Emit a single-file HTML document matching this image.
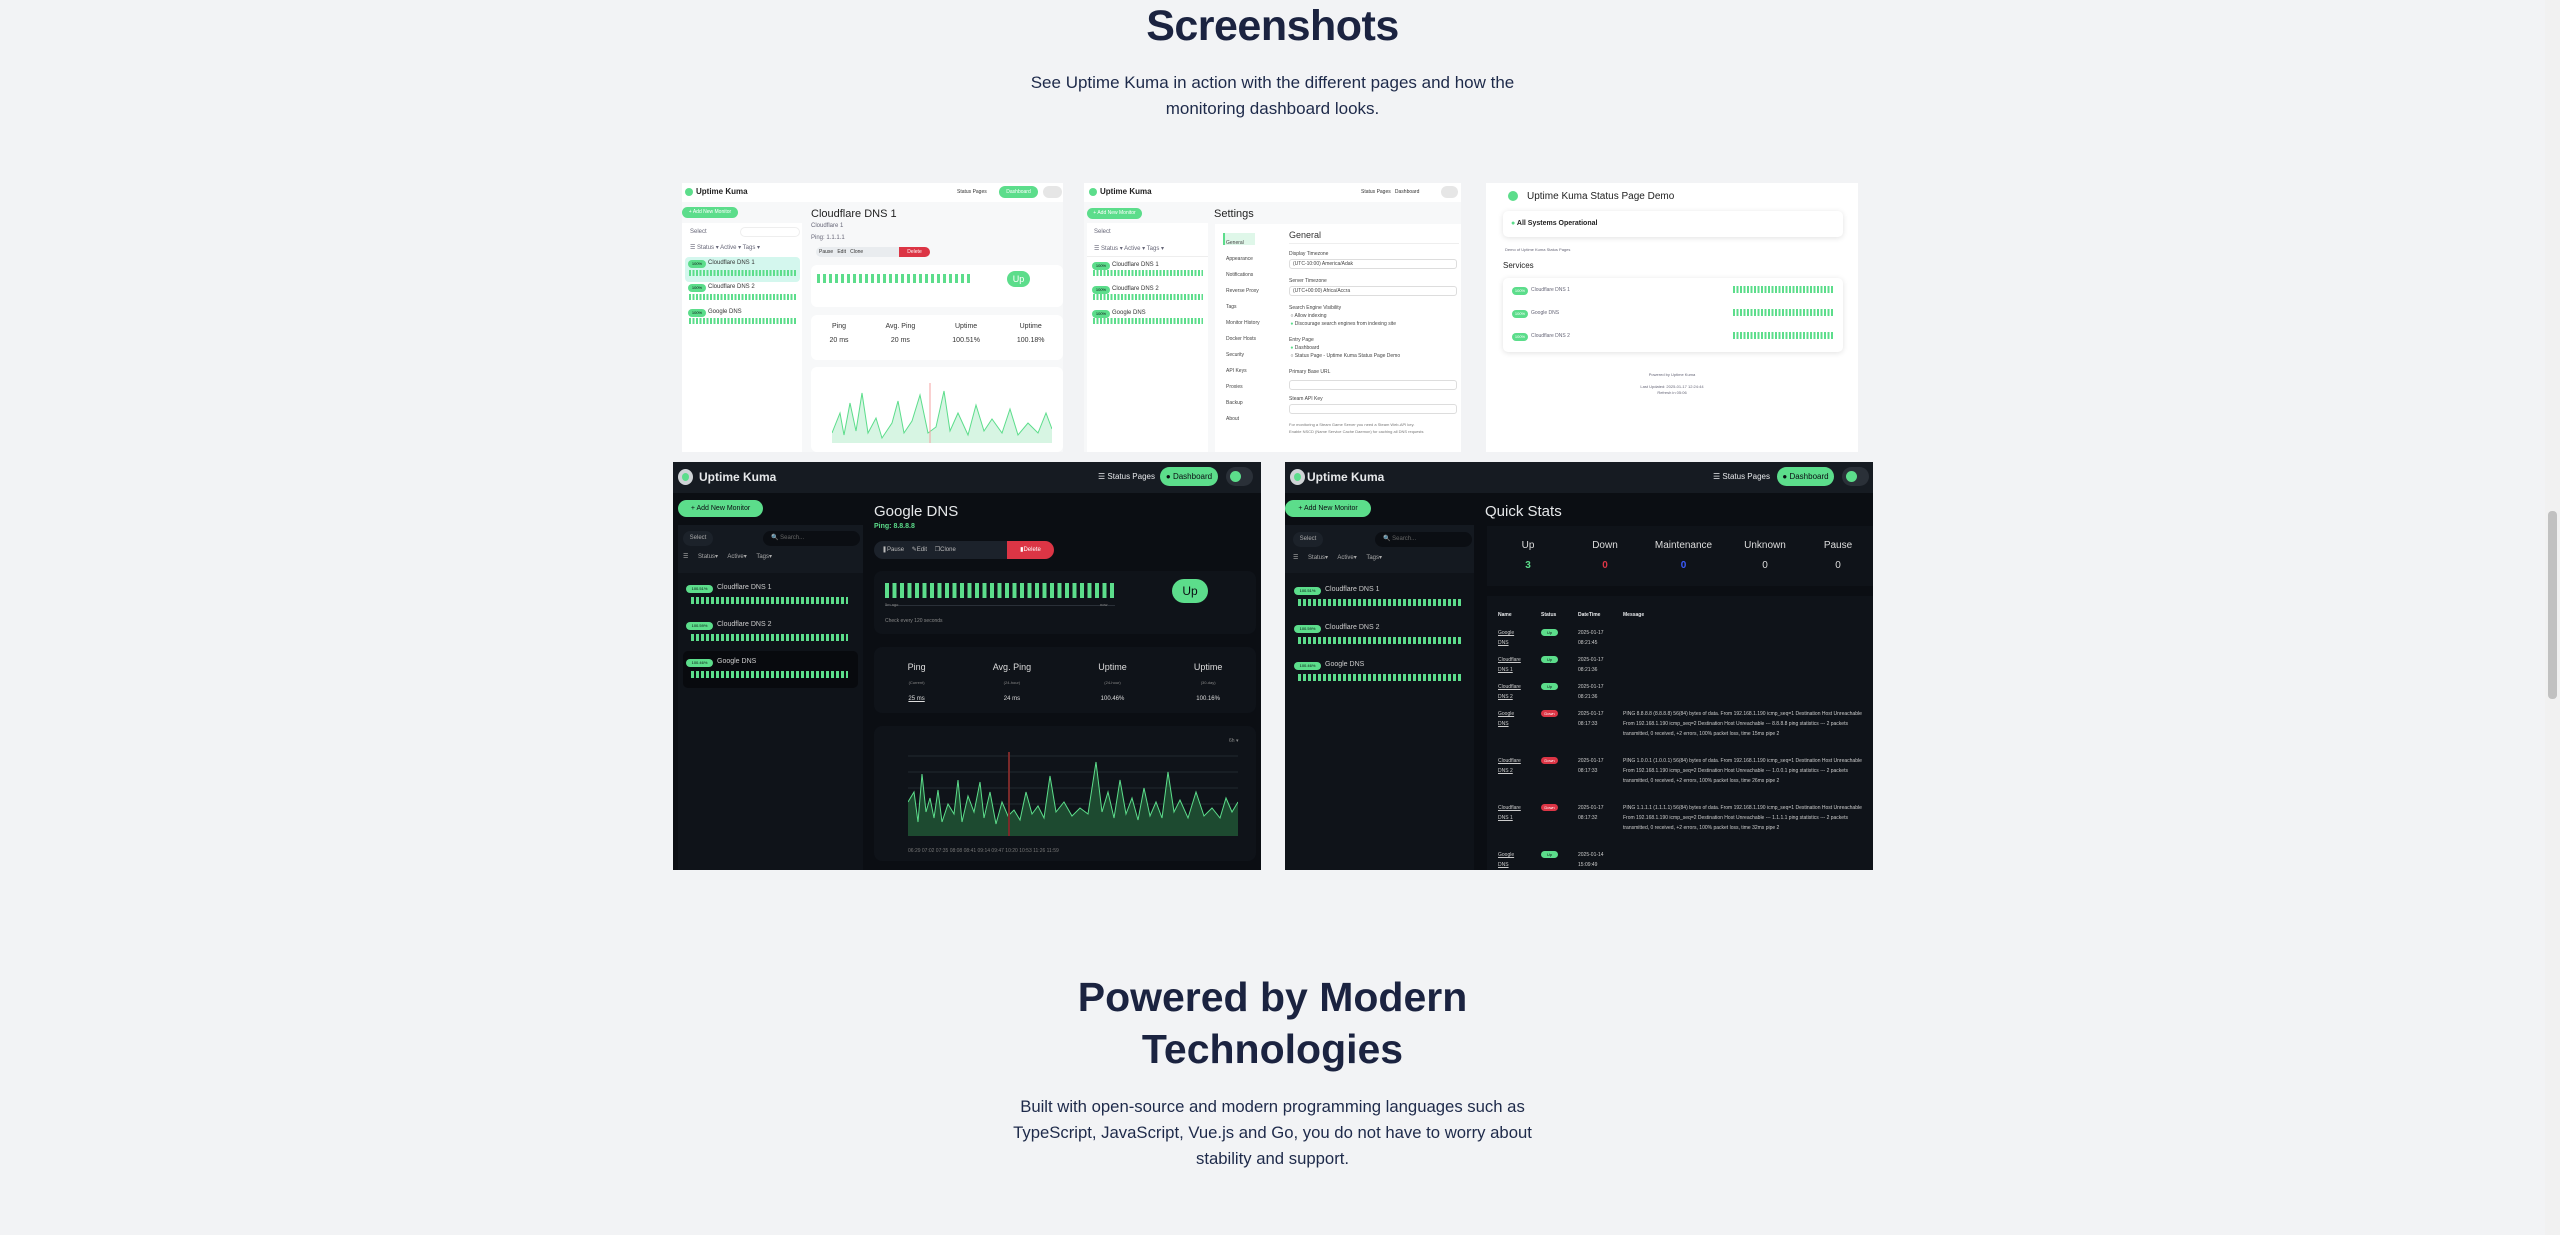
<!DOCTYPE html>
<html><head><meta charset="utf-8"><style>
*{margin:0;padding:0;box-sizing:border-box}
html,body{width:2560px;height:1235px;overflow:hidden;background:#f2f3f5;font-family:"Liberation Sans",sans-serif}
.a{position:absolute}
.t{color:#1b2340;text-align:center;white-space:nowrap}
.shot{position:absolute;overflow:hidden}
.lt{background:#f6f7f8}
.dk{background:#0b0e13}
.hb{background:repeating-linear-gradient(90deg,#5cdd8b 0 2px,transparent 2px 3.5px)}
.hbd{background:repeating-linear-gradient(90deg,#5cdd8b 0 4px,transparent 4px 7px)}
.w{color:#e6e8ea}
.g{color:#5cdd8b}
.s{font-size:6px;color:#667}
.pill{border-radius:20px;background:#5cdd8b;color:#fff;text-align:center}
.bd{border-radius:4px;background:#5cdd8b;color:#0b0e13;font-size:4px;text-align:center;line-height:8px}
</style></head><body>

<div class="a t" style="left:0;width:2545px;top:2px;font-size:43px;font-weight:bold;letter-spacing:-0.5px;line-height:48px">Screenshots</div>
<div class="a t" style="left:0;width:2545px;top:70px;font-size:17px;line-height:26px;color:#1e2a4a">See Uptime Kuma in action with the different pages and how the<br>monitoring dashboard looks.</div>

<!-- IMG1 light dashboard -->
<div class="shot lt" style="left:682px;top:183px;width:381px;height:269px;background:#f7f8f9">
  <div class="a" style="left:0;top:0;width:381px;height:19px;background:#fff"></div>
  <div class="a" style="left:3px;top:5px;width:8px;height:8px;border-radius:50%;background:#5cdd8b"></div>
  <div class="a" style="left:14px;top:4px;font-size:8px;font-weight:bold;color:#222">Uptime Kuma</div>
  <div class="a" style="left:275px;top:6px;font-size:5px;color:#333">Status Pages</div>
  <div class="a pill" style="left:317px;top:3px;width:39px;height:12px;font-size:5px;line-height:12px">Dashboard</div>
  <div class="a" style="left:361px;top:3px;width:19px;height:12px;border-radius:8px;background:#e6e6e6"></div>
  <div class="a pill" style="left:0;top:24px;width:56px;height:11px;font-size:5px;line-height:11px">+ Add New Monitor</div>
  <div class="a" style="left:0;top:40px;width:120px;height:229px;background:#fff"></div>
  <div class="a s" style="left:8px;top:46px">Select</div>
  <div class="a" style="left:58px;top:44px;width:60px;height:10px;border-radius:6px;border:1px solid #eee"></div>
  <div class="a s" style="left:8px;top:61px">☰ Status ▾ Active ▾ Tags ▾</div>
  <div class="a" style="left:3px;top:74px;width:115px;height:25px;background:#d4f7ee;border-radius:4px"></div>
  <div class="a bd" style="left:6px;top:77px;width:18px">100%</div><div class="a s" style="left:26px;top:77px;color:#333">Cloudflare DNS 1</div>
  <div class="a hb" style="left:7px;top:87px;width:108px;height:6px"></div>
  <div class="a bd" style="left:6px;top:101px;width:18px">100%</div><div class="a s" style="left:26px;top:101px;color:#333">Cloudflare DNS 2</div>
  <div class="a hb" style="left:7px;top:111px;width:108px;height:6px"></div>
  <div class="a bd" style="left:6px;top:126px;width:18px">100%</div><div class="a s" style="left:26px;top:126px;color:#333">Google DNS</div>
  <div class="a hb" style="left:7px;top:135px;width:108px;height:6px"></div>
  <div class="a" style="left:129px;top:25px;font-size:11px;color:#222">Cloudflare DNS 1</div>
  <div class="a s" style="left:129px;top:40px">Cloudflare 1</div>
  <div class="a s g" style="left:129px;top:52px">Ping: 1.1.1.1</div>
  <div class="a" style="left:134px;top:64px;width:84px;height:10px;background:#e9ecef;border-radius:5px 0 0 5px"></div>
  <div class="a s" style="left:137px;top:66px;color:#333;font-size:5px">Pause &nbsp; Edit &nbsp; Clone</div>
  <div class="a" style="left:217px;top:64px;width:31px;height:10px;background:#dc3545;border-radius:0 5px 5px 0;color:#fff;font-size:5px;line-height:10px;text-align:center">Delete</div>
  <div class="a" style="left:129px;top:82px;width:252px;height:42px;background:#fff;border-radius:6px"></div>
  <div class="a hb" style="left:135px;top:91px;width:155px;height:9px;background:repeating-linear-gradient(90deg,#5cdd8b 0 3px,transparent 3px 6px)"></div>
  <div class="a pill" style="left:325px;top:88px;width:23px;height:16px;font-size:9px;line-height:16px">Up</div>
  <div class="a" style="left:129px;top:132px;width:252px;height:45px;background:#fff;border-radius:6px"></div>
  <div class="a" style="left:129px;top:140px;width:252px;font-size:7px;color:#333;display:flex;justify-content:space-around;text-align:center"><span>Ping<br><br>20 ms</span><span>Avg. Ping<br><br>20 ms</span><span>Uptime<br><br>100.51%</span><span>Uptime<br><br>100.18%</span></div>
  <div class="a" style="left:129px;top:184px;width:252px;height:85px;background:#fff;border-radius:6px"></div>
  <svg class="a" style="left:150px;top:200px" width="220" height="68" viewBox="0 0 220 68"><polygon fill="#d7f5e3" points="0,60 0,50 8,30 12,52 18,20 24,48 30,10 36,50 44,35 50,55 60,40 66,18 72,50 80,38 88,12 96,50 104,44 112,8 118,48 126,30 136,52 144,22 152,48 160,36 170,50 178,26 186,52 196,40 206,50 214,30 220,46 220,60"/><polyline fill="none" stroke="#5cdd8b" stroke-width="1" points="0,50 8,30 12,52 18,20 24,48 30,10 36,50 44,35 50,55 60,40 66,18 72,50 80,38 88,12 96,50 104,44 112,8 118,48 126,30 136,52 144,22 152,48 160,36 170,50 178,26 186,52 196,40 206,50 214,30 220,46"/><line x1="98" y1="0" x2="98" y2="60" stroke="#f4a0a0"/></svg>
</div>

<!-- IMG2 settings -->
<div class="shot" style="left:1084px;top:183px;width:377px;height:269px;background:#f7f8f9">
  <div class="a" style="left:0;top:0;width:377px;height:19px;background:#fff"></div>
  <div class="a" style="left:5px;top:5px;width:8px;height:8px;border-radius:50%;background:#5cdd8b"></div>
  <div class="a" style="left:16px;top:4px;font-size:8px;font-weight:bold;color:#222">Uptime Kuma</div>
  <div class="a" style="left:277px;top:6px;font-size:5px;color:#333">Status Pages &nbsp; Dashboard</div>
  <div class="a" style="left:357px;top:3px;width:17px;height:12px;border-radius:8px;background:#e6e6e6"></div>
  <div class="a pill" style="left:3px;top:25px;width:55px;height:11px;font-size:5px;line-height:11px">+ Add New Monitor</div>
  <div class="a" style="left:3px;top:40px;width:121px;height:229px;background:#fff"></div>
  <div class="a s" style="left:10px;top:46px">Select</div>
  <div class="a s" style="left:10px;top:62px">☰ Status ▾ Active ▾ Tags ▾</div>
  <div class="a" style="left:3px;top:73px;width:121px;height:1px;background:#eee"></div>
  <div class="a bd" style="left:8px;top:79px;width:18px">100%</div><div class="a s" style="left:28px;top:79px;color:#333">Cloudflare DNS 1</div>
  <div class="a hb" style="left:9px;top:87px;width:110px;height:6px"></div>
  <div class="a bd" style="left:8px;top:103px;width:18px">100%</div><div class="a s" style="left:28px;top:103px;color:#333">Cloudflare DNS 2</div>
  <div class="a hb" style="left:9px;top:111px;width:110px;height:6px"></div>
  <div class="a bd" style="left:8px;top:127px;width:18px">100%</div><div class="a s" style="left:28px;top:127px;color:#333">Google DNS</div>
  <div class="a hb" style="left:9px;top:135px;width:110px;height:6px"></div>
  <div class="a" style="left:130px;top:25px;font-size:11px;color:#222">Settings</div>
  <div class="a" style="left:131px;top:41px;width:248px;height:228px;background:#fff"></div>
  <div class="a" style="left:139px;top:50px;width:32px;height:12px;background:#dff7e9;border-left:2px solid #5cdd8b"></div>
  <div class="a s" style="left:142px;top:52px;line-height:16px;font-size:5px;color:#444">General<br>Appearance<br>Notifications<br>Reverse Proxy<br>Tags<br>Monitor History<br>Docker Hosts<br>Security<br>API Keys<br>Proxies<br>Backup<br>About</div>
  <div class="a" style="left:205px;top:47px;font-size:9px;color:#333">General</div>
  <div class="a" style="left:205px;top:60px;width:170px;height:1px;background:#eee"></div>
  <div class="a s" style="left:205px;top:68px;font-size:5px;color:#444">Display Timezone</div>
  <div class="a" style="left:205px;top:76px;width:168px;height:10px;border:1px solid #ddd;border-radius:3px;font-size:5px;color:#444;padding-left:3px;line-height:8px">(UTC-10:00) America/Adak</div>
  <div class="a s" style="left:205px;top:95px;font-size:5px;color:#444">Server Timezone</div>
  <div class="a" style="left:205px;top:103px;width:168px;height:10px;border:1px solid #ddd;border-radius:3px;font-size:5px;color:#444;padding-left:3px;line-height:8px">(UTC+00:00) Africa/Accra</div>
  <div class="a s" style="left:205px;top:121px;font-size:5px;color:#444;line-height:8px">Search Engine Visibility<br>&nbsp;○ Allow indexing<br>&nbsp;<span class="g">●</span> Discourage search engines from indexing site<br><br>Entry Page<br>&nbsp;<span class="g">●</span> Dashboard<br>&nbsp;○ Status Page - Uptime Kuma Status Page Demo<br><br>Primary Base URL</div>
  <div class="a" style="left:205px;top:197px;width:168px;height:10px;border:1px solid #ddd;border-radius:3px"></div>
  <div class="a s" style="left:205px;top:213px;font-size:5px;color:#444">Steam API Key</div>
  <div class="a" style="left:205px;top:221px;width:168px;height:10px;border:1px solid #ddd;border-radius:3px"></div>
  <div class="a s" style="left:205px;top:238px;font-size:4px;color:#777;line-height:7px">For monitoring a Steam Game Server you need a Steam Web-API key.<br>Enable NSCD (Name Service Cache Daemon) for caching all DNS requests</div>
</div>

<!-- IMG3 status page -->
<div class="shot" style="left:1486px;top:183px;width:372px;height:269px;background:#fff">
  <div class="a" style="left:22px;top:8px;width:10px;height:10px;border-radius:50%;background:#5cdd8b"></div>
  <div class="a" style="left:41px;top:8px;font-size:10px;color:#222">Uptime Kuma Status Page Demo</div>
  <div class="a" style="left:17px;top:28px;width:340px;height:26px;background:#fff;box-shadow:0 1px 6px rgba(0,0,0,.12);border-radius:5px"></div>
  <div class="a" style="left:25px;top:37px;font-size:7px;font-weight:bold;color:#222"><span class="g">●</span> All Systems Operational</div>
  <div class="a s" style="left:19px;top:64px;font-size:4px">Demo of Uptime Kuma Status Pages</div>
  <div class="a" style="left:17px;top:78px;font-size:8px;color:#222">Services</div>
  <div class="a" style="left:17px;top:95px;width:340px;height:74px;background:#fff;box-shadow:0 1px 6px rgba(0,0,0,.12);border-radius:5px"></div>
  <div class="a bd" style="left:26px;top:104px;width:16px;color:#fff">100%</div><div class="a s" style="left:45px;top:104px;font-size:5px">Cloudflare DNS 1</div>
  <div class="a hb" style="left:247px;top:103px;width:101px;height:7px"></div>
  <div class="a bd" style="left:26px;top:127px;width:16px;color:#fff">100%</div><div class="a s" style="left:45px;top:127px;font-size:5px">Google DNS</div>
  <div class="a hb" style="left:247px;top:126px;width:101px;height:7px"></div>
  <div class="a bd" style="left:26px;top:150px;width:16px;color:#fff">100%</div><div class="a s" style="left:45px;top:150px;font-size:5px">Cloudflare DNS 2</div>
  <div class="a hb" style="left:247px;top:149px;width:101px;height:7px"></div>
  <div class="a s" style="left:0;width:372px;text-align:center;top:189px;font-size:4px;line-height:6px">Powered by Uptime Kuma<br><br>Last Updated: 2025-01-17 12:24:44<br>Refresh in 05:06</div>
</div>

<!-- IMG4 dark dashboard -->
<div class="shot dk" style="left:673px;top:462px;width:588px;height:408px">
  <div class="a" style="left:0;top:0;width:588px;height:31px;background:#161b22"></div>
  <div class="a" style="left:5px;top:7px;width:15px;height:16px;border-radius:50%;background:#cfd3d6"></div>
  <div class="a" style="left:9px;top:11px;width:7px;height:8px;border-radius:50%;background:#5cdd8b"></div>
  <div class="a w" style="left:26px;top:8px;font-size:12px;font-weight:bold">Uptime Kuma</div>
  <div class="a w" style="left:425px;top:10px;font-size:8px">☰ Status Pages</div>
  <div class="a pill" style="left:487px;top:5px;width:58px;height:19px;font-size:8px;line-height:19px;color:#0b0e13">● Dashboard</div>
  <div class="a" style="left:553px;top:5px;width:27px;height:19px;border-radius:10px;background:#2a3038"></div>
  <div class="a" style="left:557px;top:9px;width:11px;height:11px;border-radius:50%;background:#5cdd8b"></div>
  <div class="a pill" style="left:5px;top:38px;width:85px;height:17px;font-size:7px;line-height:17px;color:#0b0e13">+ Add New Monitor</div>
  <div class="a" style="left:5px;top:63px;width:185px;height:345px;background:#0f1319"></div>
  <div class="a" style="left:5px;top:63px;width:185px;height:48px;background:#141920"></div>
  <div class="a" style="left:10px;top:69px;width:30px;height:15px;border-radius:8px;background:#1c222a;color:#aaa;font-size:6px;line-height:15px;text-align:center">Select</div>
  <div class="a" style="left:90px;top:69px;width:97px;height:15px;border-radius:8px;background:#0b0e13;color:#666;font-size:6px;line-height:15px;padding-left:8px">🔍 Search...</div>
  <div class="a" style="left:10px;top:91px;font-size:6px;color:#aaa;word-spacing:8px">☰ Status▾ Active▾ Tags▾</div>
  <div class="a bd" style="left:13px;top:123px;width:27px;height:8px">100.51%</div><div class="a w" style="left:44px;top:122px;font-size:7px;color:#ccc">Cloudflare DNS 1</div>
  <div class="a" style="left:18px;top:135px;width:157px;height:7px;background:repeating-linear-gradient(90deg,#5cdd8b 0 3px,transparent 3px 5px)"></div>
  <div class="a bd" style="left:13px;top:160px;width:27px;height:8px">100.59%</div><div class="a w" style="left:44px;top:159px;font-size:7px;color:#ccc">Cloudflare DNS 2</div>
  <div class="a" style="left:18px;top:172px;width:157px;height:7px;background:repeating-linear-gradient(90deg,#5cdd8b 0 3px,transparent 3px 5px)"></div>
  <div class="a" style="left:10px;top:189px;width:175px;height:37px;background:#080a0e;border-radius:5px"></div>
  <div class="a bd" style="left:13px;top:197px;width:27px;height:8px">100.46%</div><div class="a w" style="left:44px;top:196px;font-size:7px;color:#ccc">Google DNS</div>
  <div class="a" style="left:18px;top:209px;width:157px;height:7px;background:repeating-linear-gradient(90deg,#5cdd8b 0 3px,transparent 3px 5px)"></div>
  <div class="a w" style="left:201px;top:41px;font-size:15px">Google DNS</div>
  <div class="a g" style="left:201px;top:61px;font-size:7px;font-weight:bold">Ping: 8.8.8.8</div>
  <div class="a" style="left:201px;top:79px;width:133px;height:18px;background:#1c222b;border-radius:9px 0 0 9px;color:#bbb;font-size:6px;line-height:18px;padding-left:8px;word-spacing:6px">❚Pause ✎Edit ❐Clone</div>
  <div class="a" style="left:334px;top:79px;width:47px;height:18px;background:#dc3545;border-radius:0 9px 9px 0;color:#fff;font-size:6px;line-height:18px;text-align:center">▮Delete</div>
  <div class="a" style="left:201px;top:109px;width:382px;height:63px;background:#0f1319;border-radius:8px"></div>
  <div class="a" style="left:212px;top:121px;width:231px;height:15px;background:repeating-linear-gradient(90deg,#5cdd8b 0 4px,transparent 4px 7.5px)"></div>
  <div class="a" style="left:212px;top:143px;width:230px;height:1px;background:#2a3038"></div>
  <div class="a s" style="left:212px;top:140px;font-size:4px;color:#888">5m ago</div>
  <div class="a s" style="left:427px;top:140px;font-size:4px;color:#888">now</div>
  <div class="a s" style="left:212px;top:156px;font-size:5px;color:#888">Check every 120 seconds</div>
  <div class="a pill" style="left:499px;top:117px;width:36px;height:24px;font-size:12px;line-height:24px;color:#0b0e13">Up</div>
  <div class="a" style="left:201px;top:185px;width:382px;height:66px;background:#0f1319;border-radius:8px"></div>
  <div class="a" style="left:201px;top:198px;width:382px;color:#ddd;font-size:9px;display:flex;justify-content:space-around;text-align:center;line-height:14px"><span>Ping<br><span style="font-size:4px;color:#888">(Current)</span><br><span style="font-size:6px;text-decoration:underline">25 ms</span></span><span>Avg. Ping<br><span style="font-size:4px;color:#888">(24-hour)</span><br><span style="font-size:6px">24 ms</span></span><span>Uptime<br><span style="font-size:4px;color:#888">(24-hour)</span><br><span style="font-size:6px">100.46%</span></span><span>Uptime<br><span style="font-size:4px;color:#888">(30-day)</span><br><span style="font-size:6px">100.16%</span></span></div>
  <div class="a" style="left:201px;top:264px;width:382px;height:135px;background:#0f1319;border-radius:8px"></div>
  <div class="a s" style="left:556px;top:276px;font-size:5px;color:#888">6h ▾</div>
  <svg class="a" style="left:235px;top:290px" width="330" height="106" viewBox="0 0 330 106"><g stroke="#222830" stroke-width="1"><line x1="0" y1="4" x2="330" y2="4"/><line x1="0" y1="20" x2="330" y2="20"/><line x1="0" y1="36" x2="330" y2="36"/><line x1="0" y1="52" x2="330" y2="52"/><line x1="0" y1="68" x2="330" y2="68"/></g><polygon fill="#1d4a30" points="0,84 0,50 6,40 10,70 14,22 18,60 22,46 26,66 30,38 34,70 40,52 46,62 50,28 54,70 60,44 66,60 72,30 76,66 82,40 88,72 94,50 100,64 106,58 112,68 118,40 124,62 130,54 136,66 142,24 148,60 156,50 164,64 172,56 180,62 188,10 194,60 200,40 206,66 212,28 218,62 224,46 230,68 236,36 242,64 248,50 254,66 260,20 266,60 272,48 280,66 288,40 296,64 304,56 312,66 318,46 324,60 330,50 330,84"/><polyline fill="none" stroke="#5cdd8b" stroke-width="1" points="0,50 6,40 10,70 14,22 18,60 22,46 26,66 30,38 34,70 40,52 46,62 50,28 54,70 60,44 66,60 72,30 76,66 82,40 88,72 94,50 100,64 106,58 112,68 118,40 124,62 130,54 136,66 142,24 148,60 156,50 164,64 172,56 180,62 188,10 194,60 200,40 206,66 212,28 218,62 224,46 230,68 236,36 242,64 248,50 254,66 260,20 266,60 272,48 280,66 288,40 296,64 304,56 312,66 318,46 324,60 330,50"/><line x1="101" y1="0" x2="101" y2="84" stroke="#7a2a2a" stroke-width="2"/><text x="0" y="100" font-size="5" fill="#777" font-family="Liberation Sans">06:29   07:02   07:35   08:08   08:41   09:14   09:47   10:20   10:53   11:26   11:59</text></svg>
</div>

<!-- IMG5 dark quick stats -->
<div class="shot dk" style="left:1285px;top:462px;width:588px;height:408px">
  <div class="a" style="left:0;top:0;width:588px;height:31px;background:#161b22"></div>
  <div class="a" style="left:5px;top:7px;width:15px;height:16px;border-radius:50%;background:#cfd3d6"></div>
  <div class="a" style="left:9px;top:11px;width:7px;height:8px;border-radius:50%;background:#5cdd8b"></div>
  <div class="a w" style="left:22px;top:8px;font-size:12px;font-weight:bold">Uptime Kuma</div>
  <div class="a w" style="left:428px;top:10px;font-size:8px">☰ Status Pages</div>
  <div class="a pill" style="left:492px;top:5px;width:57px;height:19px;font-size:8px;line-height:19px;color:#0b0e13">● Dashboard</div>
  <div class="a" style="left:557px;top:5px;width:27px;height:19px;border-radius:10px;background:#2a3038"></div>
  <div class="a" style="left:561px;top:9px;width:11px;height:11px;border-radius:50%;background:#5cdd8b"></div>
  <div class="a pill" style="left:0;top:38px;width:86px;height:17px;font-size:7px;line-height:17px;color:#0b0e13">+ Add New Monitor</div>
  <div class="a" style="left:0;top:63px;width:189px;height:345px;background:#0f1319"></div>
  <div class="a" style="left:0;top:63px;width:189px;height:48px;background:#141920"></div>
  <div class="a" style="left:8px;top:70px;width:30px;height:15px;border-radius:8px;background:#1c222a;color:#aaa;font-size:6px;line-height:15px;text-align:center">Select</div>
  <div class="a" style="left:90px;top:70px;width:97px;height:15px;border-radius:8px;background:#0b0e13;color:#666;font-size:6px;line-height:15px;padding-left:8px">🔍 Search...</div>
  <div class="a" style="left:8px;top:92px;font-size:6px;color:#aaa;word-spacing:8px">☰ Status▾ Active▾ Tags▾</div>
  <div class="a bd" style="left:9px;top:125px;width:27px;height:8px">100.51%</div><div class="a w" style="left:40px;top:124px;font-size:7px;color:#ccc">Cloudflare DNS 1</div>
  <div class="a" style="left:13px;top:137px;width:163px;height:7px;background:repeating-linear-gradient(90deg,#5cdd8b 0 3px,transparent 3px 5px)"></div>
  <div class="a bd" style="left:9px;top:163px;width:27px;height:8px">100.59%</div><div class="a w" style="left:40px;top:162px;font-size:7px;color:#ccc">Cloudflare DNS 2</div>
  <div class="a" style="left:13px;top:175px;width:163px;height:7px;background:repeating-linear-gradient(90deg,#5cdd8b 0 3px,transparent 3px 5px)"></div>
  <div class="a bd" style="left:9px;top:200px;width:27px;height:8px">100.46%</div><div class="a w" style="left:40px;top:199px;font-size:7px;color:#ccc">Google DNS</div>
  <div class="a" style="left:13px;top:212px;width:163px;height:7px;background:repeating-linear-gradient(90deg,#5cdd8b 0 3px,transparent 3px 5px)"></div>
  <div class="a w" style="left:200px;top:41px;font-size:15px">Quick Stats</div>
  <div class="a" style="left:202px;top:64px;width:386px;height:60px;background:#0f1319"></div>
  <div class="a" style="left:202px;top:74px;width:386px;display:flex;font-size:10px;color:#ddd;text-align:center;line-height:20px">
    <span style="width:82px">Up<br><b class="g">3</b></span><span style="width:72px">Down<br><b style="color:#dc3545">0</b></span><span style="width:85px">Maintenance<br><b style="color:#3b5bff">0</b></span><span style="width:78px">Unknown<br>0</span><span style="width:68px">Pause<br>0</span></div>
  <div class="a" style="left:202px;top:134px;width:386px;height:274px;background:#0f1319"></div>
  <div class="a w" style="left:213px;top:150px;font-size:5px;font-weight:bold">Name</div>
  <div class="a w" style="left:256px;top:150px;font-size:5px;font-weight:bold">Status</div>
  <div class="a w" style="left:293px;top:150px;font-size:5px;font-weight:bold">DateTime</div>
  <div class="a w" style="left:338px;top:150px;font-size:5px;font-weight:bold">Message</div>
  <div class="a" style="left:213px;top:166px;font-size:5px;color:#ccc;line-height:10px;width:370px">
    <div style="position:relative;height:27px"><u>Google<br>DNS</u><span class="bd" style="position:absolute;left:43px;top:1px;width:17px;height:7px">Up</span><span style="position:absolute;left:80px;top:0">2025-01-17<br>08:21:45</span></div>
    <div style="position:relative;height:27px"><u>Cloudflare<br>DNS 1</u><span class="bd" style="position:absolute;left:43px;top:1px;width:17px;height:7px">Up</span><span style="position:absolute;left:80px;top:0">2025-01-17<br>08:21:36</span></div>
    <div style="position:relative;height:27px"><u>Cloudflare<br>DNS 2</u><span class="bd" style="position:absolute;left:43px;top:1px;width:17px;height:7px">Up</span><span style="position:absolute;left:80px;top:0">2025-01-17<br>08:21:36</span></div>
    <div style="position:relative;height:47px"><u>Google<br>DNS</u><span class="bd" style="position:absolute;left:43px;top:1px;width:17px;height:7px;background:#dc3545;color:#fff">Down</span><span style="position:absolute;left:80px;top:0">2025-01-17<br>08:17:33</span><span style="position:absolute;left:125px;top:0;width:245px">PING 8.8.8.8 (8.8.8.8) 56(84) bytes of data. From 192.168.1.190 icmp_seq=1 Destination Host Unreachable From 192.168.1.190 icmp_seq=2 Destination Host Unreachable --- 8.8.8.8 ping statistics --- 2 packets transmitted, 0 received, +2 errors, 100% packet loss, time 15ms pipe 2</span></div>
    <div style="position:relative;height:47px"><u>Cloudflare<br>DNS 2</u><span class="bd" style="position:absolute;left:43px;top:1px;width:17px;height:7px;background:#dc3545;color:#fff">Down</span><span style="position:absolute;left:80px;top:0">2025-01-17<br>08:17:33</span><span style="position:absolute;left:125px;top:0;width:245px">PING 1.0.0.1 (1.0.0.1) 56(84) bytes of data. From 192.168.1.190 icmp_seq=1 Destination Host Unreachable From 192.168.1.190 icmp_seq=2 Destination Host Unreachable --- 1.0.0.1 ping statistics --- 2 packets transmitted, 0 received, +2 errors, 100% packet loss, time 26ms pipe 2</span></div>
    <div style="position:relative;height:47px"><u>Cloudflare<br>DNS 1</u><span class="bd" style="position:absolute;left:43px;top:1px;width:17px;height:7px;background:#dc3545;color:#fff">Down</span><span style="position:absolute;left:80px;top:0">2025-01-17<br>08:17:32</span><span style="position:absolute;left:125px;top:0;width:245px">PING 1.1.1.1 (1.1.1.1) 56(84) bytes of data. From 192.168.1.190 icmp_seq=1 Destination Host Unreachable From 192.168.1.190 icmp_seq=2 Destination Host Unreachable --- 1.1.1.1 ping statistics --- 2 packets transmitted, 0 received, +2 errors, 100% packet loss, time 32ms pipe 2</span></div>
    <div style="position:relative;height:27px"><u>Google<br>DNS</u><span class="bd" style="position:absolute;left:43px;top:1px;width:17px;height:7px">Up</span><span style="position:absolute;left:80px;top:0">2025-01-14<br>15:09:49</span></div>
  </div>
</div>

<div class="a t" style="left:0;width:2545px;top:971px;font-size:41px;font-weight:bold;line-height:52px">Powered by Modern<br>Technologies</div>
<div class="a t" style="left:0;width:2545px;top:1094px;font-size:16.7px;line-height:26px;color:#1e2a4a">Built with open-source and modern programming languages such as<br>TypeScript, JavaScript, Vue.js and Go, you do not have to worry about<br>stability and support.</div>

<div class="a" style="left:2545px;top:0;width:15px;height:1235px;background:#f1f1f1"></div>
<div class="a" style="left:2548px;top:511px;width:9px;height:188px;background:#c1c1c1;border-radius:4px"></div>
</body></html>
